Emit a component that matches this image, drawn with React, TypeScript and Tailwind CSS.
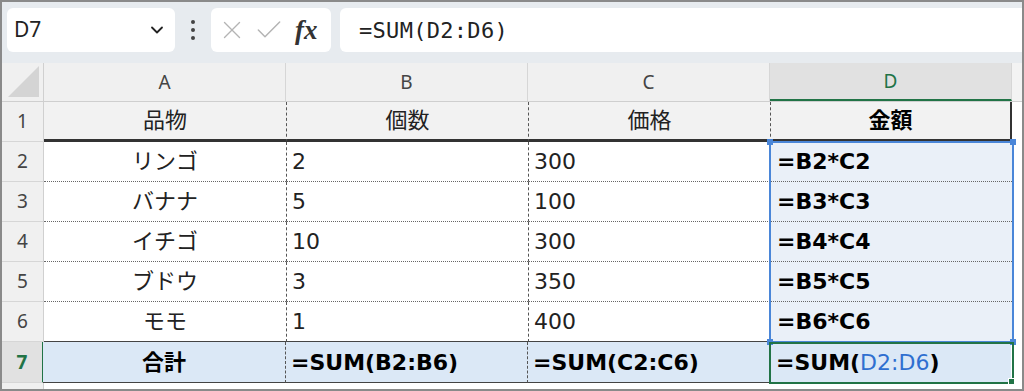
import { Check, ChevronDown, X } from 'lucide-react';

type Row = {
  n: number;
  a: string;
  b: string;
  c: string;
  d: string;
};

const ROWS: Row[] = [
  { n: 2, a: 'リンゴ', b: '2', c: '300', d: '=B2*C2' },
  { n: 3, a: 'バナナ', b: '5', c: '100', d: '=B3*C3' },
  { n: 4, a: 'イチゴ', b: '10', c: '300', d: '=B4*C4' },
  { n: 5, a: 'ブドウ', b: '3', c: '350', d: '=B5*C5' },
  { n: 6, a: 'モモ', b: '1', c: '400', d: '=B6*C6' },
];

const cellFont = { fontFamily: '"DejaVu Sans", "Noto Sans CJK JP", sans-serif' };
const uiFont = { fontFamily: '"Noto Sans", "Open Sans", sans-serif' };

// vertical dashed gridline on the left edge of a cell
const dashL = 'border-l border-l-[#555] [border-left-style:dashed]';

function RowHead({ n, active }: { n: number; active?: boolean }) {
  return (
    <div
      className={
        'w-[42px] shrink-0 flex items-center justify-center text-[19px] border-b border-[#d6d6d6] ' +
        (active
          ? 'bg-[#e1e1e1] text-[#217346] border-r-2 border-r-[#217346]'
          : 'bg-[#f0f0f0] text-[#444] border-r border-r-[#d0d0d0]')
      }
      style={uiFont}
    >
      {n}
    </div>
  );
}

export default function App() {
  return (
    <div className="w-[1024px] h-[391px] border-2 border-[#8a8a8a] bg-white overflow-hidden flex flex-col">
      {/* formula bar */}
      <div className="h-[61px] shrink-0 bg-[#e7ebef] flex items-start pt-[6px] pl-[5px]">
        <div className="w-[168px] h-[44px] bg-white rounded-[6px] flex items-center pl-[7px] pr-[8px]">
          <span className="text-[21px] text-[#222] flex-1" style={uiFont}>D7</span>
          <ChevronDown size={20} strokeWidth={2.2} className="text-[#222]" />
        </div>
        <div className="w-[36px] h-[44px] flex flex-col items-center justify-center gap-[4px]">
          <div className="w-[4px] h-[4px] rounded-full bg-[#444]" />
          <div className="w-[4px] h-[4px] rounded-full bg-[#444]" />
          <div className="w-[4px] h-[4px] rounded-full bg-[#444]" />
        </div>
        <div className="w-[120px] h-[44px] bg-white rounded-[6px] flex items-center pl-[6px] gap-[6px]">
          <X size={30} strokeWidth={1.1} className="text-[#b4b4b4]" />
          <Check size={32} strokeWidth={1.1} className="text-[#b4b4b4]" />
          <span
            className="text-[27px] italic font-bold text-[#333] ml-[4px] leading-none"
            style={{ fontFamily: '"Liberation Serif", "DejaVu Serif", serif' }}
          >
            fx
          </span>
        </div>
        <div className="flex-1 ml-[9px] h-[44px] bg-white rounded-l-[6px] flex items-center pl-[19px]">
          <span
            className="text-[22px] text-[#222] tracking-[0.3px]"
            style={{ fontFamily: '"DejaVu Sans Mono", "Liberation Mono", monospace' }}
          >
            =SUM(D2:D6)
          </span>
        </div>
      </div>

      {/* column headers */}
      <div className="h-[39px] shrink-0 flex bg-[#f0f0f0] border-b border-[#cfcfcf] text-[19px] text-[#444]" style={uiFont}>
        <div className="w-[42px] shrink-0 border-r border-[#d0d0d0] flex items-end justify-end pr-[4px] pb-[4px]">
          <svg width="31" height="31" viewBox="0 0 31 31">
            <polygon points="31,0 31,31 0,31" fill="#d4d4d4" />
          </svg>
        </div>
        <div className="w-[242px] shrink-0 border-r border-[#d6d6d6] flex items-center justify-center">A</div>
        <div className="w-[242px] shrink-0 border-r border-[#d6d6d6] flex items-center justify-center">B</div>
        <div className="w-[242px] shrink-0 border-r border-[#d6d6d6] flex items-center justify-center">C</div>
        <div className="w-[242px] shrink-0 bg-[#e1e1e1] text-[#217346] border-b-2 border-[#217346] border-r border-r-[#d6d6d6] flex items-center justify-center">
          D
        </div>
        <div className="flex-1 bg-[#f3f3f3]" />
      </div>

      {/* sheet body */}
      <div className="relative flex-1 flex flex-col text-[22px] text-[#222]" style={cellFont}>
        {/* row 1 */}
        <div className="h-[40px] flex">
          <RowHead n={1} />
          <div className="w-[242px] shrink-0 bg-[#f2f2f2] border-b-[3px] border-b-[#333] flex items-center justify-center">
            品物
          </div>
          <div className={'w-[242px] shrink-0 bg-[#f2f2f2] border-b-[3px] border-b-[#333] flex items-center justify-center ' + dashL}>
            個数
          </div>
          <div className={'w-[242px] shrink-0 bg-[#f2f2f2] border-b-[3px] border-b-[#333] flex items-center justify-center ' + dashL}>
            価格
          </div>
          <div className={'w-[242px] shrink-0 bg-[#f2f2f2] border-b-[3px] border-b-[#333] border-r-2 border-r-[#333] flex items-center justify-center font-bold text-black ' + dashL}>
            金額
          </div>
          <div className="flex-1" />
        </div>

        {ROWS.map((r) => {
          const last = r.n === 6;
          const line = last
            ? 'border-b border-b-[#444] [border-bottom-style:solid]'
            : 'border-b border-b-[#666] [border-bottom-style:dotted]';
          return (
            <div key={r.n} className="h-[40px] flex">
              <RowHead n={r.n} />
              <div className={'w-[242px] shrink-0 flex items-center justify-center ' + line}>{r.a}</div>
              <div className={'w-[242px] shrink-0 flex items-center pl-[5px] ' + dashL + ' ' + line}>{r.b}</div>
              <div className={'w-[242px] shrink-0 flex items-center pl-[5px] ' + dashL + ' ' + line}>{r.c}</div>
              <div className={'w-[242px] shrink-0 bg-[#eaf0f8] flex items-center pl-[6px] font-bold text-black ' + dashL + ' ' + line}>
                {r.d}
              </div>
              <div className="flex-1" />
            </div>
          );
        })}

        {/* row 7 totals */}
        <div className="h-[41px] flex font-bold text-black">
          <RowHead n={7} active />
          <div className="w-[242px] shrink-0 bg-[#dbe8f6] border-b border-b-[#444] flex items-center justify-center -ml-px">
            合計
          </div>
          <div className={'w-[242px] shrink-0 bg-[#dbe8f6] border-b border-b-[#444] flex items-center pl-[5px] ' + dashL}>
            =SUM(B2:B6)
          </div>
          <div className={'w-[242px] shrink-0 bg-[#dbe8f6] border-b border-b-[#444] flex items-center pl-[5px] ' + dashL}>
            =SUM(C2:C6)
          </div>
          <div className="w-[242px] shrink-0 bg-[#dbe8f6] border-b border-b-[#444] flex items-center pl-[7px]">
            =SUM(<span className="font-normal text-[#2f6fd0]">D2:D6</span>)
          </div>
          <div className="flex-1" />
        </div>

        <div className="flex-1 flex">
          <div className="w-[42px] shrink-0 bg-[#f0f0f0] border-r border-[#d0d0d0]" />
          <div className="flex-1" />
        </div>

        {/* referenced range D2:D6 */}
        <div className="absolute left-[767px] top-[39px] w-[245px] h-[202px] border-2 border-[#4a86d8] pointer-events-none" />
        <div className="absolute left-[765px] top-[37px] w-[6px] h-[6px] bg-[#4a86d8]" />
        <div className="absolute left-[1008px] top-[37px] w-[6px] h-[6px] bg-[#4a86d8]" />
        <div className="absolute left-[765px] top-[237px] w-[6px] h-[6px] bg-[#4a86d8]" />
        <div className="absolute left-[1008px] top-[237px] w-[6px] h-[6px] bg-[#4a86d8]" />

        {/* active cell D7 */}
        <div className="absolute left-[767px] top-[240px] w-[245px] h-[42px] border-2 border-[#217346] pointer-events-none" />
        <div className="absolute left-[1006px] top-[276px] w-[7px] h-[7px] bg-[#217346] border border-white" />
      </div>
    </div>
  );
}
